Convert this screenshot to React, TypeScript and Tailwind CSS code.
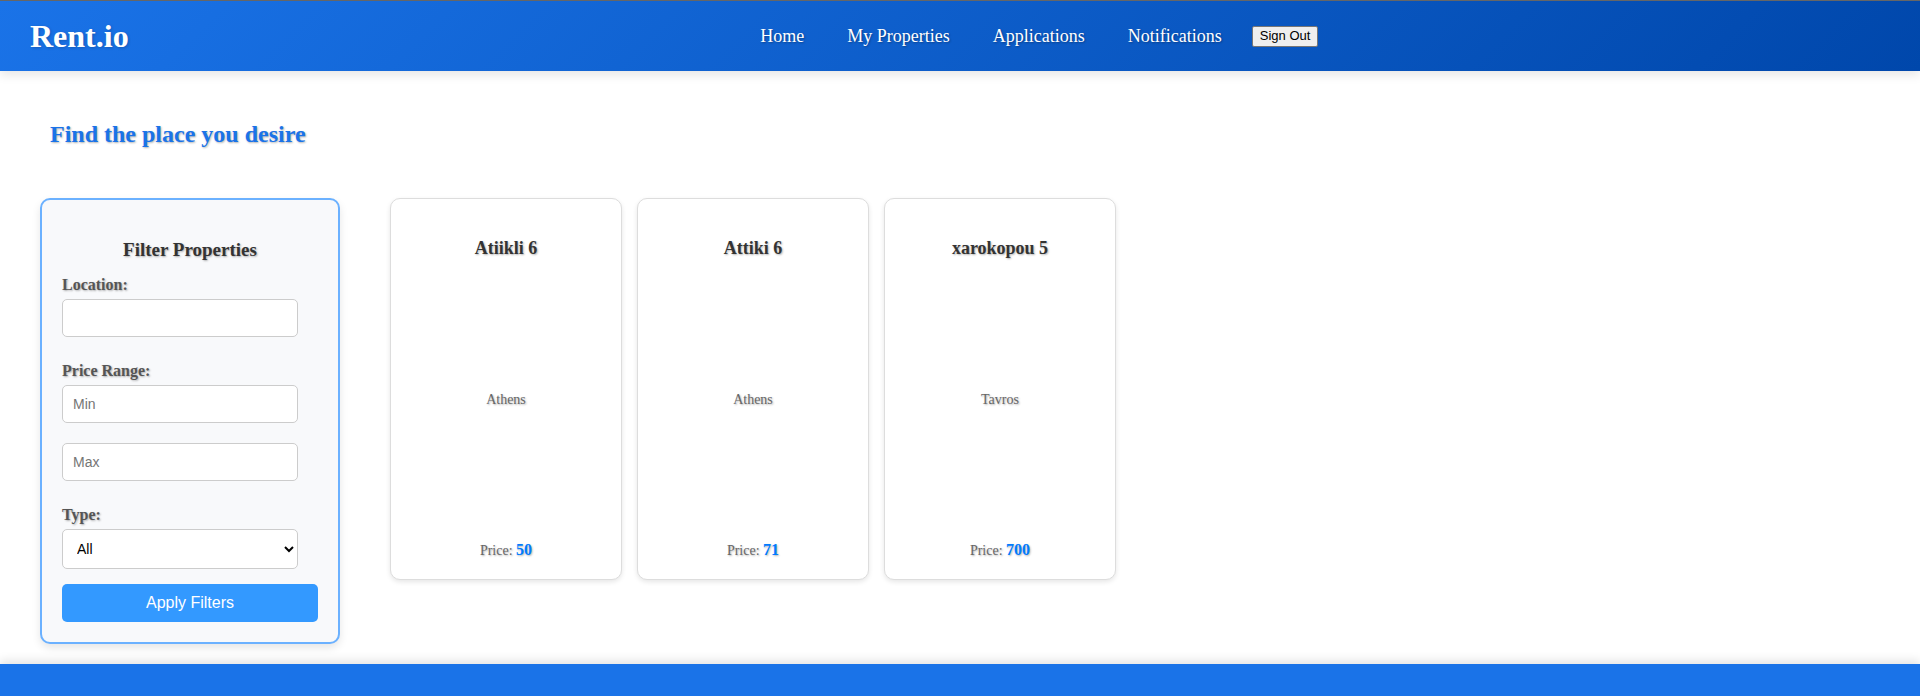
const navLinks = ["Home", "My Properties", "Applications", "Notifications"];

const properties = [
  { name: "Atiikli 6", city: "Athens", price: 50 },
  { name: "Attiki 6", city: "Athens", price: 71 },
  { name: "xarokopou 5", city: "Tavros", price: 700 },
];

const labelClass =
  "mb-1 block text-base leading-5 font-bold text-[#555] [text-shadow:1px_1px_2px_rgba(0,0,0,0.3)]";
const fieldClass =
  "block w-[236px] max-w-full rounded-[5px] border border-[#ccc] bg-white text-sm text-black placeholder:text-[#757575] font-['Liberation_Sans',Arial,sans-serif]";

function Header() {
  return (
    <header className="flex h-[71px] items-center justify-between border-t border-[#666] bg-[linear-gradient(135deg,#1a73e8,#0047ab)] bg-origin-border px-[30px] text-white shadow-[0_4px_10px_rgba(0,0,0,0.1)]">
      <a href="#" className="text-[32px] leading-9 font-bold [text-shadow:1px_1px_3px_rgba(0,0,0,0.2)]">
        Rent.io
      </a>
      <nav className="flex items-center pl-15">
        <ul className="flex gap-[43px] text-lg [text-shadow:1px_1px_2px_rgba(0,0,0,0.3)]">
          {navLinks.map((link) => (
            <li key={link}>
              <a href="#">{link}</a>
            </li>
          ))}
        </ul>
        <button
          type="button"
          className="ml-[30px] h-[21px] rounded-[2px] border border-[#767676] bg-[#efefef] px-[7px] font-['Liberation_Sans',Arial,sans-serif] text-[13px] leading-4 text-black"
        >
          Sign Out
        </button>
      </nav>
      <div />
    </header>
  );
}

function Filters() {
  return (
    <form className="w-[300px] shrink-0 rounded-[10px] border-2 border-[#6bb1ff] bg-[#f8f9fb] px-5 pt-[38px] pb-5 shadow-[0_4px_8px_rgba(0,0,0,0.1)]">
      <h3 className="mb-[13px] text-center text-[19px] leading-6 font-bold text-[#333] [text-shadow:1px_1px_2px_rgba(0,0,0,0.3)]">
        Filter Properties
      </h3>
      <label htmlFor="location" className={labelClass}>
        Location:
      </label>
      <input id="location" type="text" className={`${fieldClass} mb-6 h-[38px] px-2.5`} />
      <label htmlFor="min" className={labelClass}>
        Price Range:
      </label>
      <input id="min" type="text" placeholder="Min" className={`${fieldClass} mb-5 h-[38px] px-2.5`} />
      <input id="max" type="text" aria-label="Maximum price" placeholder="Max" className={`${fieldClass} mb-6 h-[38px] px-2.5`} />
      <label htmlFor="type" className={labelClass}>
        Type:
      </label>
      <select id="type" className={`${fieldClass} mb-[15px] h-10 pl-2.5`}>
        <option>All</option>
      </select>
      <button
        type="button"
        className="h-[38px] w-full rounded-[5px] bg-[#3399ff] font-['Liberation_Sans',Arial,sans-serif] text-base text-white"
      >
        Apply Filters
      </button>
    </form>
  );
}

export default function App() {
  return (
    <div className="bg-white font-['Liberation_Serif','Times_New_Roman',serif]">
      <Header />
      <main className="px-10 pb-5">
        <h2 className="px-2.5 pt-12 pb-[49px] text-2xl leading-[30px] font-bold text-[#1a73e8] [text-shadow:1px_1px_2px_rgba(0,0,0,0.3)]">
          Find the place you desire
        </h2>
        <div className="flex items-start gap-[50px]">
          <Filters />
          <div className="flex flex-wrap gap-[15px]">
            {properties.map((property) => (
              <article
                key={property.name}
                className="flex h-[382px] w-[232px] flex-col items-center justify-between rounded-[10px] border border-[#ddd] bg-white px-5 pt-[37px] pb-[18px] shadow-[0_2px_5px_rgba(0,0,0,0.1)] [text-shadow:1px_1px_2px_rgba(0,0,0,0.3)]"
              >
                <h3 className="text-[18px] leading-6 font-bold text-[#333]">{property.name}</h3>
                <p className="text-sm leading-5 text-[#666]">{property.city}</p>
                <p className="text-sm leading-5 text-[#666]">
                  Price: <strong className="text-base leading-5 text-[#007bff]">{property.price}</strong>
                </p>
              </article>
            ))}
          </div>
        </div>
      </main>
      <footer className="h-8 bg-[#1a73e8] shadow-[0_-4px_10px_rgba(0,0,0,0.1)]" />
    </div>
  );
}
